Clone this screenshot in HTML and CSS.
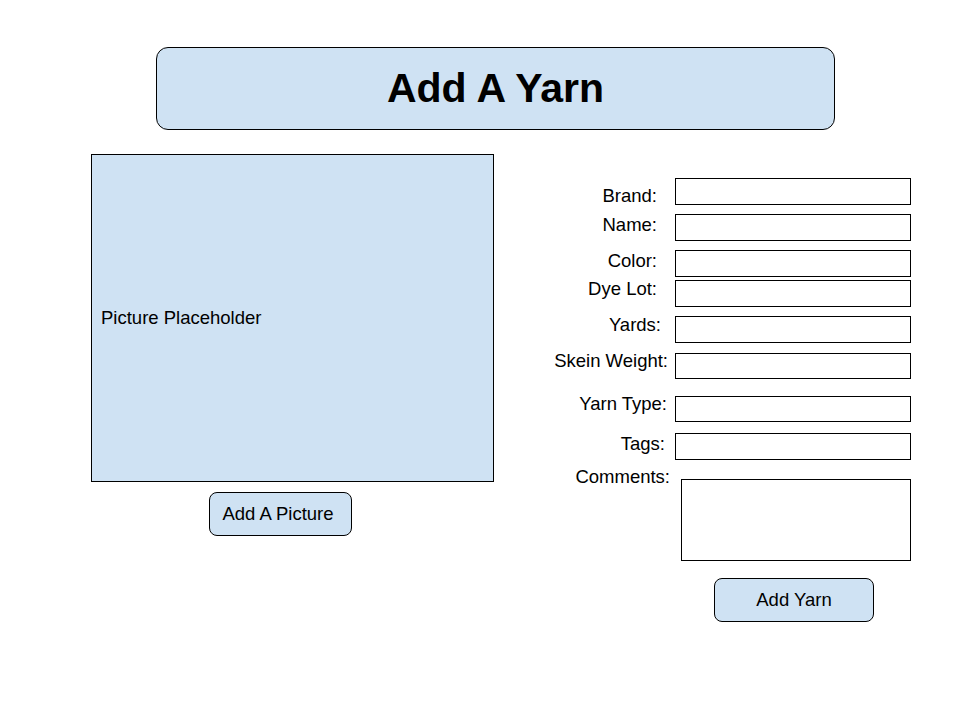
FILE: index.html
```html
<!DOCTYPE html>
<html lang="en">
<head>
<meta charset="utf-8">
<title>Add A Yarn</title>
<link rel="stylesheet" href="styles.css">
</head>
<body>
<header class="title-bar"><h1 class="title">Add A Yarn</h1></header>
<main class="content">
  <section class="picture-col">
    <div class="picture-box">Picture Placeholder</div>
    <button class="btn btn-picture" type="button">Add A Picture</button>
  </section>
  <form class="yarn-form">
    <div class="field field-brand"><label class="field-label">Brand:</label><span class="field-input"></span></div>
    <div class="field field-name"><label class="field-label">Name:</label><span class="field-input"></span></div>
    <div class="field field-color"><label class="field-label">Color:</label><span class="field-input"></span></div>
    <div class="field field-dye"><label class="field-label">Dye Lot:</label><span class="field-input"></span></div>
    <div class="field field-yards"><label class="field-label">Yards:</label><span class="field-input"></span></div>
    <div class="field field-skein"><label class="field-label">Skein Weight:</label><span class="field-input field-input-short"></span></div>
    <div class="field field-type"><label class="field-label">Yarn Type:</label><span class="field-input field-input-short"></span></div>
    <div class="field field-tags"><label class="field-label">Tags:</label><span class="field-input"></span></div>
    <div class="field field-comments"><label class="field-label">Comments:</label><span class="field-textarea"></span></div>
    <button class="btn btn-yarn" type="button">Add Yarn</button>
  </form>
</main>
</body>
</html>
```

FILE: styles.css
```css
* { box-sizing: border-box; }
html, body { margin: 0; padding: 0; background: #fff; }
body {
  width: 960px;
  height: 720px;
  font-family: "Liberation Sans", Arial, sans-serif;
  color: #000;
  overflow: hidden;
}
.title-bar {
  margin: 47px 0 0 156px;
  width: 679px;
  height: 83px;
  background: #cfe2f3;
  border: 1px solid #000;
  border-radius: 12px;
  display: flex;
  align-items: center;
  justify-content: center;
}
.title {
  margin: 0;
  font-size: 41px;
  font-weight: bold;
  line-height: 1;
}
.content {
  display: flex;
  margin-top: 24px;
}
.picture-col {
  margin-left: 91px;
  width: 403px;
  display: flex;
  flex-direction: column;
}
.picture-box {
  height: 328px;
  background: #cfe2f3;
  border: 1px solid #000;
  display: flex;
  align-items: center;
  padding: 0 0 0 9px;
  font-size: 18.5px;
}
.btn {
  font-family: "Liberation Sans", Arial, sans-serif;
  font-size: 18.5px;
  color: #000;
  background: #cfe2f3;
  border: 1px solid #000;
  border-radius: 8px;
  height: 44px;
  padding: 0;
  display: flex;
  align-items: center;
  justify-content: center;
}
.btn-picture {
  margin: 10px 0 0 118px;
  width: 143px;
  padding-right: 5px;
}
.yarn-form {
  margin: 0 0 0 46px;
  padding-top: 24px;
  display: flex;
  flex-direction: column;
}
.field {
  display: flex;
  align-items: flex-start;
  height: 26px;
}
.field-label {
  width: 135px;
  text-align: right;
  font-size: 18.5px;
  line-height: 21px;
  padding-right: 18px;
  white-space: nowrap;
}
.field-input {
  display: block;
  width: 236px;
  height: 27px;
  border: 1px solid #000;
}
.field-input-short { height: 26px; }
.field-brand .field-label { margin-top: 7px; }
.field-name { margin-top: 10px; }
.field-color { margin-top: 10px; }
.field-dye { margin-top: 4px; }
.field-dye .field-label { margin-top: -2px; }
.field-yards { margin-top: 10px; }
.field-yards .field-label { margin-top: -2px; padding-right: 14px; }
.field-skein { margin-top: 11px; }
.field-skein .field-label { margin-top: -3px; padding-right: 7px; }
.field-type { margin-top: 17px; }
.field-type .field-label { margin-top: -3px; padding-right: 8px; }
.field-tags { margin-top: 11px; }
.field-tags .field-label { padding-right: 10px; }
.field-comments {
  margin-top: 7px;
  height: auto;
}
.field-comments .field-label { padding-right: 5px; }
.field-textarea {
  display: block;
  margin: 13px 0 0 6px;
  width: 230px;
  height: 82px;
  border: 1px solid #000;
}
.btn-yarn {
  margin: 17px 0 0 174px;
  width: 160px;
}
```
